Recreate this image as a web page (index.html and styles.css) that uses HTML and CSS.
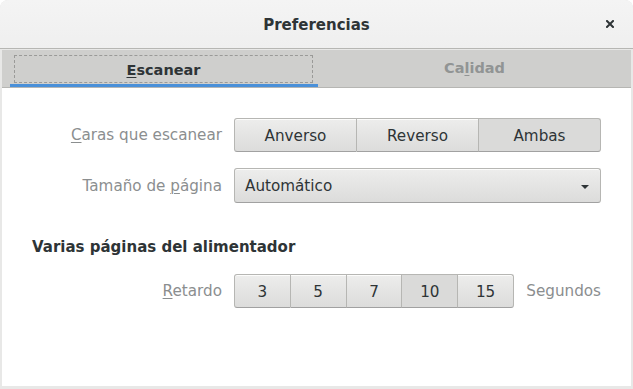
FILE: index.html
```html
<!DOCTYPE html>
<html>
  <head>
    <meta charset="utf-8">
    <title>Preferencias</title>
    <link rel="stylesheet" href="styles.css">
  </head>
  <body>
    <div class="window">
      <header class="titlebar">
        <span></span>
        <span class="title">Preferencias</span>
        <button class="close" title="Cerrar">
          <svg width="8" height="8" viewBox="0 0 8 8"><path d="M1 1 L7 7 M7 1 L1 7" stroke="#2e3436" stroke-width="2" stroke-linecap="square"/></svg>
        </button>
      </header>

      <div class="tabs">
        <div class="tab active"><span class="focus"><u>E</u>scanear</span></div>
        <div class="tab">Ca<u>l</u>idad</div>
      </div>

      <div class="page">
        <div class="form">
          <label class="dim"><u>C</u>aras que escanear</label>
          <div class="linked">
            <button>Anverso</button>
            <button>Reverso</button>
            <button class="checked">Ambas</button>
          </div>

          <label class="dim">Tamaño de <u>p</u>ágina</label>
          <button class="combo">
            <span>Automático</span>
            <svg width="8" height="4" viewBox="0 0 8 4"><path d="M0 0 H8 L4 4 Z" fill="#2e3436"/></svg>
          </button>

          <h2 class="heading">Varias páginas del alimentador</h2>

          <label class="dim"><u>R</u>etardo</label>
          <div class="delay-row">
            <div class="linked delay">
              <button>3</button>
              <button>5</button>
              <button>7</button>
              <button class="checked">10</button>
              <button>15</button>
            </div>
            <span class="dim">Segundos</span>
          </div>
        </div>
      </div>
    </div>
  </body>
</html>
```

FILE: styles.css
```css
  body { margin: 0; background: #fff; font-family: "DejaVu Sans", "Noto Sans", sans-serif; font-size: 15.2px; color: #2e3436; }

  .window { height: 100vh; box-sizing: border-box; display: flex; flex-direction: column; background: #e8e8e7; padding: 0 2px 3px 2px; border-radius: 8px 8px 0 0; overflow: hidden; }

  .titlebar { height: 48px; margin: 0 -2px; display: grid; grid-template-columns: 1fr auto 1fr; align-items: center; background: linear-gradient(#f4f4f4, #efefef); border-bottom: 1px solid #b6b6b3; border-radius: 8px 8px 0 0; flex-shrink: 0; }
  .title { font-weight: bold; font-size: 15px; padding-top: 1px; }
  .close { justify-self: end; margin-right: 11px; width: 24px; height: 24px; border: none; background: none; padding: 0; display: flex; align-items: center; justify-content: center; }

  .tabs { margin-top: 1px; height: 37px; display: flex; padding: 0 2px 0 8px; background: #cfcfcd; border-bottom: 1px solid #b6b6b3; flex-shrink: 0; }
  .tab { flex: 1; display: flex; align-items: center; justify-content: center; font-weight: bold; font-size: 14.5px; color: #919494; border-bottom: 3px solid transparent; }
  .tab:last-child { padding-left: 2px; padding-top: 2px; }
  .tab.active { flex: none; width: 308px; box-sizing: border-box; color: #2e3436; border-bottom-color: #4a90d9; padding: 5px 5px 1px 4px; }
  .focus { flex: 1; align-self: stretch; display: flex; align-items: center; justify-content: center; padding-top: 1px; outline: 1px dashed #9a9a98; outline-offset: -1px; }

  u { text-decoration-thickness: 1px; text-underline-offset: 2px; }

  .page { flex: 1; background: #fff; padding: 30px 30px 0 30px; }

  .form { display: grid; grid-template-columns: 1fr 367px; column-gap: 12px; row-gap: 16px; align-items: center; }
  .dim { color: #8b8e8f; }
  .form > label { text-align: right; }

  button { font: inherit; color: #2e3436; }

  .linked { display: flex; }
  .linked > button { flex: 1; height: 34px; padding: 1px 6px 0; border: 1px solid #b6b6b3; border-bottom-color: #a1a1a1; border-left-width: 0; background: linear-gradient(#ededec, #dcdcdb); box-shadow: inset 0 1px rgba(255,255,255,0.8); }
  .linked > button:first-child { border-left-width: 1px; border-radius: 3px 0 0 3px; }
  .linked > button:last-child { border-radius: 0 3px 3px 0; }
  .linked > button.checked { background: #dadad9; box-shadow: none; }

  .combo { height: 35px; display: flex; align-items: center; justify-content: space-between; padding: 1px 11px 0 10px; border: 1px solid #b6b6b3; border-bottom-color: #a1a1a1; border-radius: 3px; background: linear-gradient(#ededec, #dcdcdb); box-shadow: inset 0 1px rgba(255,255,255,0.8); }
  .combo svg { margin-top: 1px; }

  .heading { grid-column: 1 / 3; margin: 19px 0 2px 0; font-size: 15px; font-weight: bold; }

  .delay-row { display: flex; align-items: center; gap: 11px; }
  .delay { width: 280px; }
  .delay-row > .dim { flex: 1; text-align: right; }
```
